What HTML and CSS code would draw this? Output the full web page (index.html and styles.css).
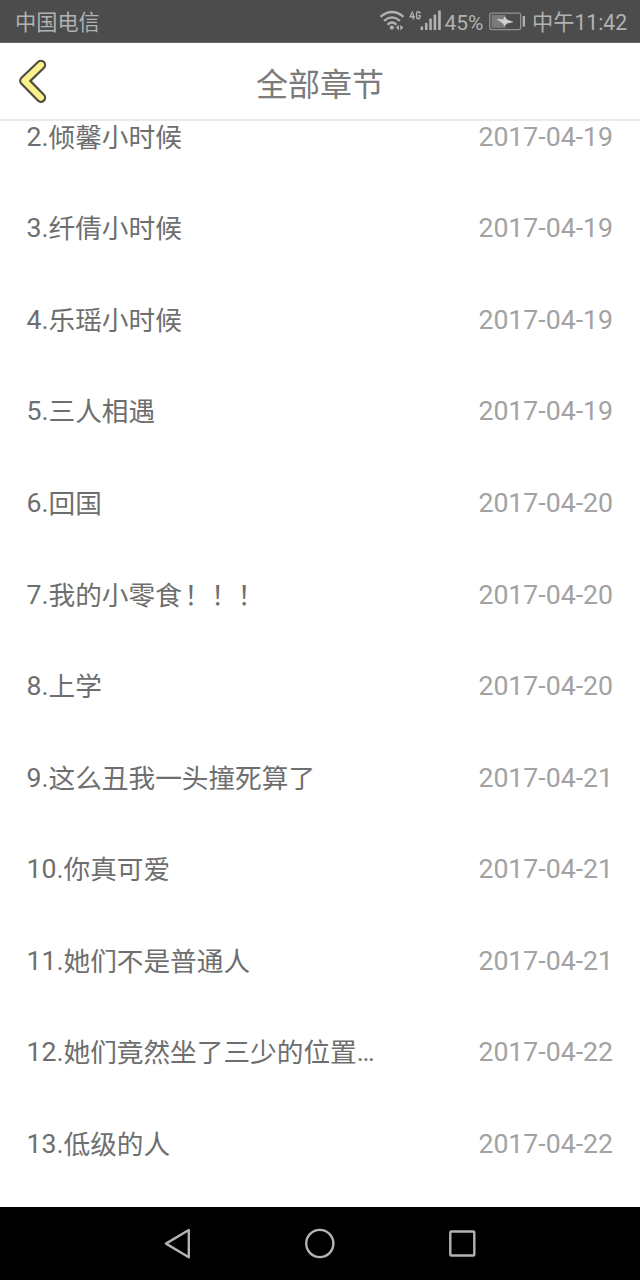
FILE: index.html
```html
<!DOCTYPE html>
<html lang="zh-CN">
<head>
<meta charset="utf-8">
<title>全部章节</title>
<link rel="stylesheet" href="styles.css">
</head>
<body>
<div class="screen">
  <div class="status">
    <span class="carrier">中国电信</span>
    <svg class="signals" width="62" height="24" viewBox="380 10 62 24">
      <g fill="none" stroke="#b2b2b2" stroke-width="2.3">
        <path d="M380.5 17.8Q392 8.2 403.5 17.8"/>
        <path d="M384 21.8Q392 15 400 21.8"/>
        <path d="M387.5 25.6Q392 21.4 396.5 25.6"/>
      </g>
      <circle cx="391.8" cy="28.6" r="2.1" fill="#b2b2b2"/>
      <path d="M398.9 25.8v5.6l-3-2.8zM400.3 25.8v5.6l3-2.8z" fill="#b2b2b2"/>
      <g fill="none" stroke="#b2b2b2" stroke-width="1.4">
        <path d="M412.7 12.2L410.2 17.7H414.9M413.3 14.5V20.5"/>
        <path d="M420 14.8V14.3Q420 12.8 418.3 12.8Q416.6 12.8 416.6 14.5V18Q416.6 19.8 418.3 19.8Q420 19.8 420 18V16.6H418.2"/>
      </g>
      <path d="M420.6 27.5h2.5V31h-2.5zM425 24h2.5v7H425zM429.3 19.5h2.5V31h-2.5zM433.6 15.5h2.6V31h-2.6zM438.1 11.5h2.7V31h-2.7z" fill="#b2b2b2"/>
    </svg>
    <span class="percent">45%</span>
    <svg class="battery" width="38" height="20" viewBox="488 11 38 20">
      <rect x="489.7" y="13.2" width="31" height="16.4" rx="2" fill="none" stroke="#929292" stroke-width="1.3"/>
      <path d="M491.5 15h14v12.8h-14z" fill="#7b7b7b"/>
      <path d="M522.7 16h2.3v10.5h-2.3z" fill="#b2b2b2"/>
      <path d="M497 19.2l6.6.6 1-3 2.6 3.2 5.6 2-6 1.2-2.2 2.6-2-3z" fill="#d0d0d0" stroke="#d0d0d0" stroke-width=".6"/>
    </svg>
    <span class="clock">中午11:42</span>
  </div>
  <header class="header">
    <svg class="back" width="30" height="46" viewBox="18 58 30 46">
      <g fill="none" stroke-linecap="round" stroke-linejoin="round">
        <path d="M40.9 65L24.4 80.8L40.9 97.6" stroke="#4f4d42" stroke-width="10.6"/>
        <path d="M40.9 65L24.4 80.8L40.9 97.6" stroke="#fbf18c" stroke-width="6.2"/>
      </g>
    </svg>
    <h1 class="title">全部章节</h1>
  </header>
  <main class="viewport">
    <ul class="chapters">
      <li class="row"><span>2.<span class="name">倾馨小时候</span></span><time>2017-04-19</time></li>
      <li class="row"><span>3.<span class="name">纤倩小时候</span></span><time>2017-04-19</time></li>
      <li class="row"><span>4.<span class="name">乐瑶小时候</span></span><time>2017-04-19</time></li>
      <li class="row"><span>5.<span class="name">三人相遇</span></span><time>2017-04-19</time></li>
      <li class="row"><span>6.<span class="name">回国</span></span><time>2017-04-20</time></li>
      <li class="row"><span>7.<span class="name">我的小零食<span class="marks">！！！</span></span></span><time>2017-04-20</time></li>
      <li class="row"><span>8.<span class="name">上学</span></span><time>2017-04-20</time></li>
      <li class="row"><span>9.<span class="name">这么丑我一头撞死算了</span></span><time>2017-04-21</time></li>
      <li class="row"><span>10.<span class="name">你真可爱</span></span><time>2017-04-21</time></li>
      <li class="row"><span>11.<span class="name">她们不是普通人</span></span><time>2017-04-21</time></li>
      <li class="row"><span>12.<span class="name">她们竟然坐了三少的位置</span>…</span><time>2017-04-22</time></li>
      <li class="row"><span>13.<span class="name">低级的人</span></span><time>2017-04-22</time></li>
    </ul>
  </main>
  <nav class="nav">
    <svg width="30" height="34" viewBox="163 1227 30 34"><path d="M188.8 1230V1257.2L166 1243.6Z"/></svg>
    <svg width="30" height="34" viewBox="305 1227 30 34"><circle cx="319.8" cy="1243.5" r="13.6"/></svg>
    <svg width="30" height="34" viewBox="447 1227 30 34"><rect x="450.3" y="1231.5" width="24" height="24" rx="1"/></svg>
  </nav>
</div>
</body>
</html>
```
FILE: styles.css
```css
* { box-sizing: border-box; }

body {
  margin: 0;
  background: #fff;
  font-family: Roboto, "Noto Sans CJK SC", sans-serif;
}

.screen {
  display: flex;
  flex-direction: column;
  width: 640px;
  height: 1280px;
  overflow: hidden;
}

.status {
  display: flex;
  flex: none;
  align-items: center;
  height: 43px;
  padding: 0 14px 0 15px;
  background: #4c4c4c;
  border-bottom: 1px solid #6a6a6a;
  color: #b2b2b2;
  font-size: 21.2px;
  line-height: 38px;
  white-space: nowrap;
}

.carrier { padding-top: 4px; }

.percent,
.clock { padding-top: 3px; }

.signals { margin-left: auto; }
.percent { width: 39px; margin-left: 2.5px; font-size: 21px; }
.battery { margin-left: 4.5px; }
.clock { width: 94px; margin-left: 6px; }

.header {
  display: grid;
  grid-template-columns: 30px 1fr 30px;
  flex: none;
  align-items: center;
  height: 78px;
  padding: 0 18px;
  border-bottom: 2px solid #ebebeb;
}

.title {
  margin: 7px 0 0;
  color: #7b7b7b;
  font-size: 32px;
  font-weight: 400;
  line-height: 46px;
  text-align: center;
}

.viewport {
  flex: 1;
  min-height: 0;
  overflow: hidden;
}

.chapters {
  margin: -30px 0 0;
  padding: 0;
  list-style: none;
}

.row {
  display: flex;
  align-items: center;
  justify-content: space-between;
  height: 91.55px;
  padding: 0 27px 0 26.5px;
  color: #6e6e6e;
  font-size: 26.67px;
  line-height: 40px;
  white-space: nowrap;
}

.row time { color: #a2a2a2; }

.name {
  display: inline-block;
  line-height: 30px;
  transform: translateY(1px);
}

.marks { margin-left: 2.5px; }

.nav {
  display: flex;
  flex: none;
  gap: 112px;
  align-items: center;
  height: 73px;
  padding-left: 163px;
  background: #000;
}

.nav svg {
  fill: none;
  stroke: #b3b3b3;
  stroke-width: 2.4;
  stroke-linejoin: round;
}
```
